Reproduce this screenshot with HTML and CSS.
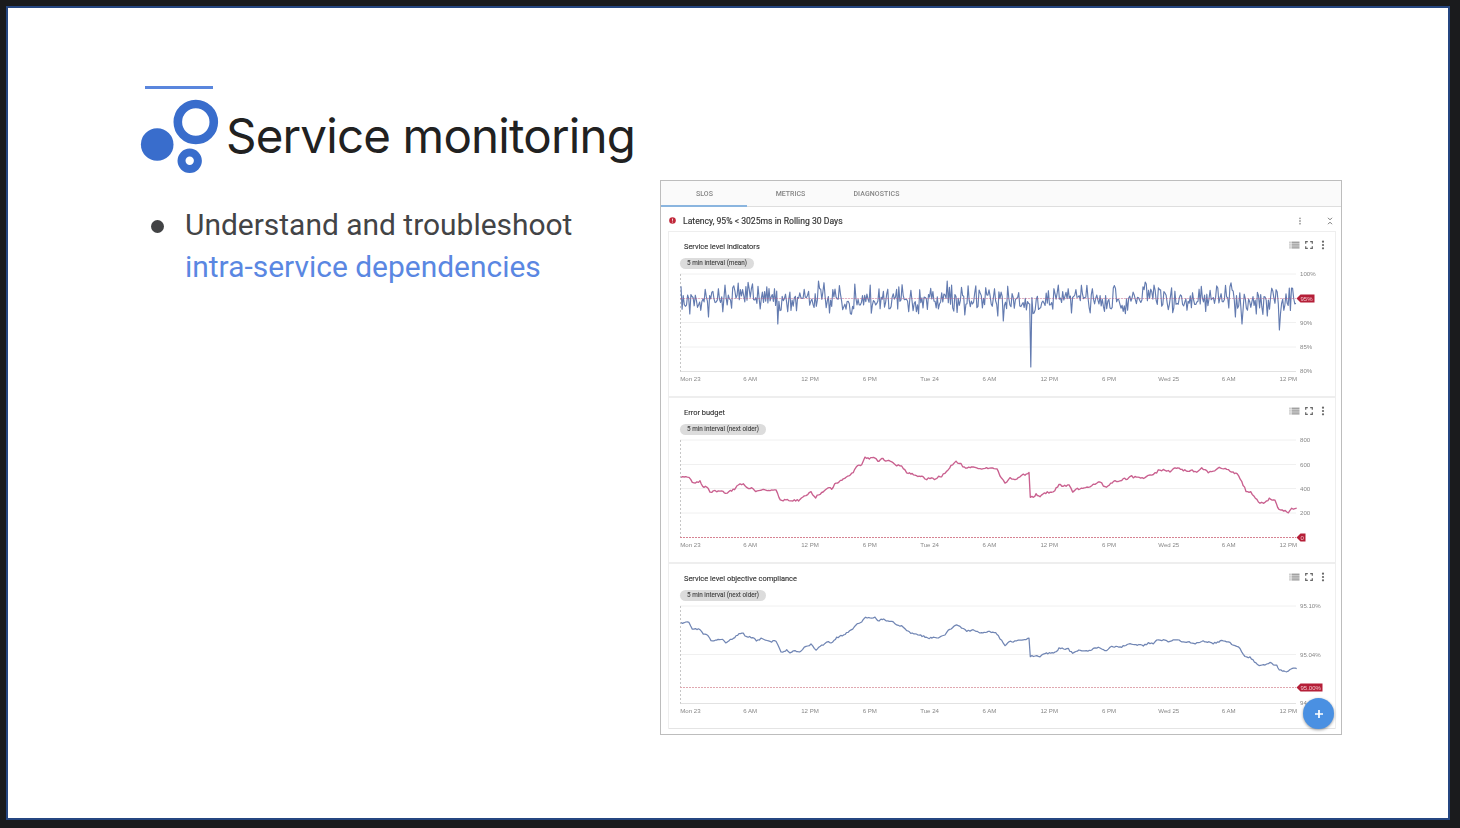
FILE: index.html
```html
<!DOCTYPE html>
<html lang="en">
<head>
<meta charset="utf-8">
<title>Service monitoring</title>
<link rel="stylesheet" href="styles.css">
</head>
<body>
<svg class="sprite" width="0" height="0">
  <symbol id="legend" viewBox="0 0 11 8"><path d="M.5 1.2h1M.5 3.1h1M.5 5h1M.5 6.9h1M2.5 1.2h8M2.5 3.1h8M2.5 5h8M2.5 6.9h8" stroke="#777" stroke-width="1"/></symbol>
  <symbol id="full" viewBox="0 0 8 8"><path d="M.7 2.8V.7h2.1M5.2.7h2.1v2.1M7.3 5.2v2.1H5.2M2.8 7.3H.7V5.2" fill="none" stroke="#666" stroke-width="1.2"/></symbol>
  <symbol id="dots" viewBox="0 0 4 10"><g fill="#666"><circle cx="2" cy="1.7" r="1.1"/><circle cx="2" cy="5" r="1.1"/><circle cx="2" cy="8.3" r="1.1"/></g></symbol>
</svg>
<main class="slide">
  <section class="intro">
    <div class="accent"></div>
    <header class="heading">
      <svg class="logo" width="80" height="78" viewBox="0 0 80 78">
        <circle cx="17.2" cy="46.5" r="16.3" fill="#396dcc"/>
        <circle cx="55.8" cy="24" r="18" fill="none" stroke="#396dcc" stroke-width="8.6"/>
        <circle cx="49.7" cy="62.8" r="8.2" fill="none" stroke="#396dcc" stroke-width="8"/>
      </svg>
      <h1 class="title">Service monitoring</h1>
    </header>
    <ul class="points">
      <li class="point"><span class="bullet"></span><p class="copy">Understand and troubleshoot<br><span class="link">intra-service dependencies</span></p></li>
    </ul>
  </section>

  <section class="panel">
    <nav class="tabs">
      <span class="tab active">SLOS</span><span class="tab">METRICS</span><span class="tab">DIAGNOSTICS</span>
    </nav>
    <div class="slo">
      <svg class="alert" width="7" height="7" viewBox="0 0 7 7"><circle cx="3.5" cy="3.5" r="3.3" fill="#c0283a"/><path d="M3.5 1.6v2.2M3.5 4.6v.9" stroke="#fff" stroke-width=".8"/></svg>
      <span class="slo-name">Latency, 95% &lt; 3025ms in Rolling 30 Days</span>
      <svg class="slo-more" width="4" height="8" viewBox="0 0 4 10"><g fill="#999"><circle cx="2" cy="1.7" r="1.1"/><circle cx="2" cy="5" r="1.1"/><circle cx="2" cy="8.3" r="1.1"/></g></svg>
      <svg width="6" height="8" viewBox="0 0 6 8"><path d="M1 .8l2 2 2-2M1 7.2l2-2 2 2" fill="none" stroke="#777" stroke-width="1"/></svg>
    </div>
    <div class="cards">
      <article class="card">
        <div class="card-head"><h2 class="card-title">Service level indicators</h2><span class="tools"><svg width="11" height="8"><use href="#legend"/></svg><svg width="8" height="8"><use href="#full"/></svg><svg width="4" height="10"><use href="#dots"/></svg></span></div>
        <span class="chip">5 min interval (mean)</span>
        <svg class="plot" id="sli" width="655" height="118" viewBox="0 -4 655 118"></svg>
      </article>
      <article class="card">
        <div class="card-head"><h2 class="card-title">Error budget</h2><span class="tools"><svg width="11" height="8"><use href="#legend"/></svg><svg width="8" height="8"><use href="#full"/></svg><svg width="4" height="10"><use href="#dots"/></svg></span></div>
        <span class="chip wide">5 min interval (next older)</span>
        <svg class="plot" id="budget" width="655" height="118" viewBox="0 -4 655 118"></svg>
      </article>
      <article class="card">
        <div class="card-head"><h2 class="card-title">Service level objective compliance</h2><span class="tools"><svg width="11" height="8"><use href="#legend"/></svg><svg width="8" height="8"><use href="#full"/></svg><svg width="4" height="10"><use href="#dots"/></svg></span></div>
        <span class="chip wide">5 min interval (next older)</span>
        <svg class="plot" id="compliance" width="655" height="118" viewBox="0 -4 655 118"></svg>
      </article>
    </div>
    <div class="fab"><svg width="10" height="10" viewBox="0 0 10 10"><path d="M5 1v8M1 5h8" stroke="#fff" stroke-width="1.7"/></svg></div>
  </section>
</main>
<script src="charts.js"></script>
</body>
</html>
```
FILE: styles.css
```css
* { box-sizing: border-box; }
body { margin: 0; width: 1460px; height: 828px; padding: 6px 10px 8px 6px; background: #1a1b1d; font-family: Roboto, "Liberation Sans", sans-serif; overflow: hidden; }
.sprite { display: block; position: absolute; }
.slide { width: 1444px; height: 814px; border: 2px solid #254680; background: #fff; display: flex; }
.intro { width: 652px; flex: none; padding: 78px 0 0 132px; }
.accent { width: 68px; height: 3px; margin-left: 5px; background: #5a86dd; }
.heading { display: flex; height: 91px; padding-top: 9px; }
.logo { flex: none; }
.title { margin: 8px 0 0 6px; font: 400 47.5px/60px Inter, sans-serif; letter-spacing: -0.82px; color: #212121; white-space: nowrap; }
.points { list-style: none; margin: 0; padding: 24px 0 0 11px; }
.point { display: flex; }
.bullet { width: 13px; height: 13px; border-radius: 50%; background: #424345; margin: 16px 21px 0 0; flex: none; }
.copy { margin: 0; font-size: 29.95px; line-height: 41.5px; color: #434446; white-space: nowrap; }
.link { color: #5a87e2; }

.panel { position: relative; width: 682px; height: 555px; margin-top: 172px; border: 1px solid #bdbdbd; background: #fff; flex: none; filter: blur(.35px); }
.tabs { display: flex; height: 26px; background: #fafafa; border-bottom: 1px solid #dedede; }
.tab { width: 86px; height: 26px; padding-left: 1px; font-size: 7px; font-weight: 500; line-height: 26px; text-align: center; color: #858585; }
.tab.active { border-bottom: 2px solid #8ab5df; }
.tab:last-child { letter-spacing: .1px; }
.slo { display: flex; align-items: center; height: 24px; padding: 3px 8px 0 8px; }
.slo-name { margin-left: 7px; flex: 1; font-size: 8.65px; color: #333; white-space: nowrap; -webkit-text-stroke: .15px #333; }
.slo-more { margin-right: 25px; }
.cards { margin: 0 5px 0 7px; border: solid #eee; border-width: 0 1px; }
.card { height: 166px; border-top: 2px solid #eee; padding-left: 11px; }
.card:first-child { height: 165px; border-top-width: 1px; }
.card:last-child { height: 167px; border-bottom: 1px solid #e4e4e4; }
.card-head { display: flex; align-items: center; justify-content: space-between; height: 23px; padding: 3px 10px 0 4px; }
.card-title { margin: 3px 0 0; font-size: 7.45px; font-weight: 400; color: #333; -webkit-text-stroke: .12px #333; }
.tools { display: flex; align-items: center; gap: 5px; height: 12px; }
.tools svg:last-child { margin-left: 3px; }
.chip { display: block; width: 74px; height: 11px; margin: 2.5px 0 0; border-radius: 6px; background: #dcdcdc; font-size: 6.35px; line-height: 11px; text-align: center; color: #444; white-space: nowrap; -webkit-text-stroke: .1px #444; }
.chip.wide { width: 86px; }
.plot { display: block; margin-top: 1.5px; overflow: visible; }
.axis { font: 6.1px "Liberation Sans", sans-serif; fill: #888; }
.tag { font: 6px "Liberation Sans", sans-serif; fill: #f3c7ce; }
.line { fill: none; stroke-linejoin: round; }
.fab { position: absolute; right: 7px; bottom: 5px; width: 31px; height: 31px; border-radius: 50%; background: #4a90e2; box-shadow: 0 1px 3px rgba(0,0,0,.4); display: flex; align-items: center; justify-content: center; }
```
FILE: charts.js
```javascript
const times = ["Mon 23", "6 AM", "12 PM", "6 PM", "Tue 24", "6 AM", "12 PM", "6 PM", "Wed 25", "6 AM", "12 PM"];
let seed = 17;
const rand = () => (seed = (seed * 16807) % 2147483647) / 2147483647;

// Places [x, y, x, y, ...] lists on the plot; lists are in thirds of a pixel.
const place = (list, dx, dy) => {
  const out = [];
  for (let i = 0; i < list.length; i += 2) out.push([list[i] / 3 + dx, list[i + 1] / 3 + dy]);
  return out;
};

// Fills in the samples between the turning points with a small ripple.
const ripple = (pts, amount) => {
  const out = [pts[0]];
  for (let i = 1; i < pts.length; i++) {
    const [x0, y0] = pts[i - 1], [x1, y1] = pts[i];
    const n = Math.max(1, Math.round((x1 - x0) / 1.5));
    for (let k = 1; k <= n; k++) {
      const t = k / n;
      out.push([x0 + (x1 - x0) * t, y0 + (y1 - y0) * t + (rand() - .5) * amount]);
    }
  }
  return out;
};

const path = pts => "M" + pts.map(p => p[0].toFixed(1) + " " + p[1].toFixed(1)).join("L");

const draw = (id, o) => {
  let s = "";
  for (const y of o.grid) s += `<path d="M0 ${y}H616" stroke="#f0f0f0"/>`;
  if (o.limit < 97) s += `<path d="M0 97.5H616" stroke="#e2e2e2"/>`;
  s += `<path d="M.5 0V97.5" stroke="#c6c6c6" stroke-dasharray="2 2"/>`;
  for (const [y, t] of o.labels) s += `<text class="axis" x="620" y="${y + 2.2}">${t}</text>`;
  times.forEach((t, i) => { s += `<text class="axis" text-anchor="middle" x="${10.4 + i * 59.8}" y="107">${t}</text>`; });
  const limit = `<path d="M0 ${o.limit}H616" stroke="${o.limitColor}" stroke-dasharray="2 1"/>`;
  const curve = `<path class="line" d="${path(o.pts)}" stroke="${o.color}" stroke-width="${o.width}"/>`;
  s += curve + limit;
  const w = o.tagWidth, y = o.limit;
  s += `<path d="M616.5 ${y}l4-4h${w - 4}v8h${4 - w}z" fill="#b51f38"/><text class="tag" x="620.5" y="${y + 2.2}">${o.tag}</text>`;
  document.getElementById(id).innerHTML = s;
};

const spikes = [[10, 40], [29, 43], [58, 9], [98, 50], [149, 39], [175, 10], [190, 11], [267, 7], [272, 11], [285, 41], [318, 42], [323, 47], [350.5, 93], [378, 11], [391, 39], [466, 10], [474, 11], [555, 43], [562, 50], [576, 40], [587, 42], [599, 56], [611, 14]];
const sli = [];
for (let x = 1; x <= 616; x += 1.1) {
  const low = (x > 225 && x < 250) || (x > 314 && x < 326) || (x > 552 && x < 590) ? 4 : 0;
  let y = 24.5 + low + Math.sin(x / 13) * 2 + (rand() + rand() - 1) * 16;
  const hit = spikes.find(p => Math.abs(p[0] - x) < .55);
  if (hit) y = hit[1];
  sli.push([x, y]);
}
draw("sli", { grid: [0, 24.5, 48.5, 73], labels: [[0, "100%"], [48.5, "90%"], [73, "85%"], [97, "80%"]], limit: 24.5, limitColor: "rgba(205,80,130,.4)", color: "#637bb0", width: 1.15, pts: sli, tag: "95%", tagWidth: 18 });

const budget = place([18,247,42,245,52,262,75,260,83,275,95,274,105,290,125,288,140,287,152,296,170,286,183,280,190,267,205,268,215,278,235,279,242,288,260,284,285,288,303,285,312,308,320,318,333,312,345,318,375,316,388,302,408,292,422,307,440,292,462,280,470,281,483,264,505,252,530,237,548,210,560,209,570,189,600,190,612,201,620,190,628,196,650,198,665,210,680,211,695,232,720,239,745,247,755,253,765,248,778,252,800,243,815,232,828,212,843,199,853,204,868,217,890,215,910,222,930,219,962,219,970,228], -5, -45)
  .concat(place([0,242,15,265,30,248,40,254,60,246,70,236,75,241,87,232,91,305,105,304,108,298,120,306,133,294,160,290,177,271,207,272,218,291,232,279,240,283,265,277,280,268,300,261,315,277,345,257,365,258,370,250,382,252,390,243,405,247,435,248,445,239,460,241,475,226,495,224,510,231,525,219,550,225,590,229,605,221,625,232,640,230,662,217,680,221,695,233,712,234,738,288,752,290,780,326,795,322,808,311,825,317,837,344,865,352,875,341,890,338], 320, -45));
draw("budget", { grid: [0, 24.5, 48.5, 73], labels: [[0, "800"], [24.5, "600"], [48.5, "400"], [73, "200"]], limit: 97.5, limitColor: "#d68392", color: "#c9608f", width: 1.35, pts: ripple(budget, 2), tag: "0", tagWidth: 9 });

const compliance = place([78,188,102,186,112,208,135,207,145,223,155,222,168,240,185,241,198,237,212,247,235,235,252,220,265,221,275,231,297,233,304,243,318,236,345,246,363,242,378,275,388,276,395,269,405,277,420,272,437,275,448,262,468,254,483,269,500,256,520,245,528,249,545,233,570,222,593,208,607,189,620,186,632,171,645,175,660,173,672,183,678,175,690,181,715,185,730,198,740,197,755,214,780,222,810,230,823,235,835,232,850,234,870,223,880,211,905,195,920,203,935,213,950,210,975,217,1000,215,1022,218,1030,228], -25, -46)
  .concat(place([0,235,15,256,28,243,40,246,60,239,70,240,87,234,91,289,110,286,120,290,135,280,165,278,177,265,205,267,218,281,232,272,268,273,280,266,300,263,315,273,335,261,365,260,390,252,430,257,445,250,460,251,470,242,490,240,510,246,525,239,550,245,590,250,605,243,640,250,665,243,685,245,700,257,715,260,735,290,750,292,777,317,795,315,810,308,830,317,838,330,860,334,875,327,890,325], 320, -46));
draw("compliance", { grid: [0, 48.5], labels: [[0, "95.10%"], [48.5, "95.04%"], [97, "94.98%"]], limit: 81.5, limitColor: "#e0a8b0", color: "#7186b4", width: 1.25, pts: ripple(compliance, 1.5), tag: "95.00%", tagWidth: 26 });
```
